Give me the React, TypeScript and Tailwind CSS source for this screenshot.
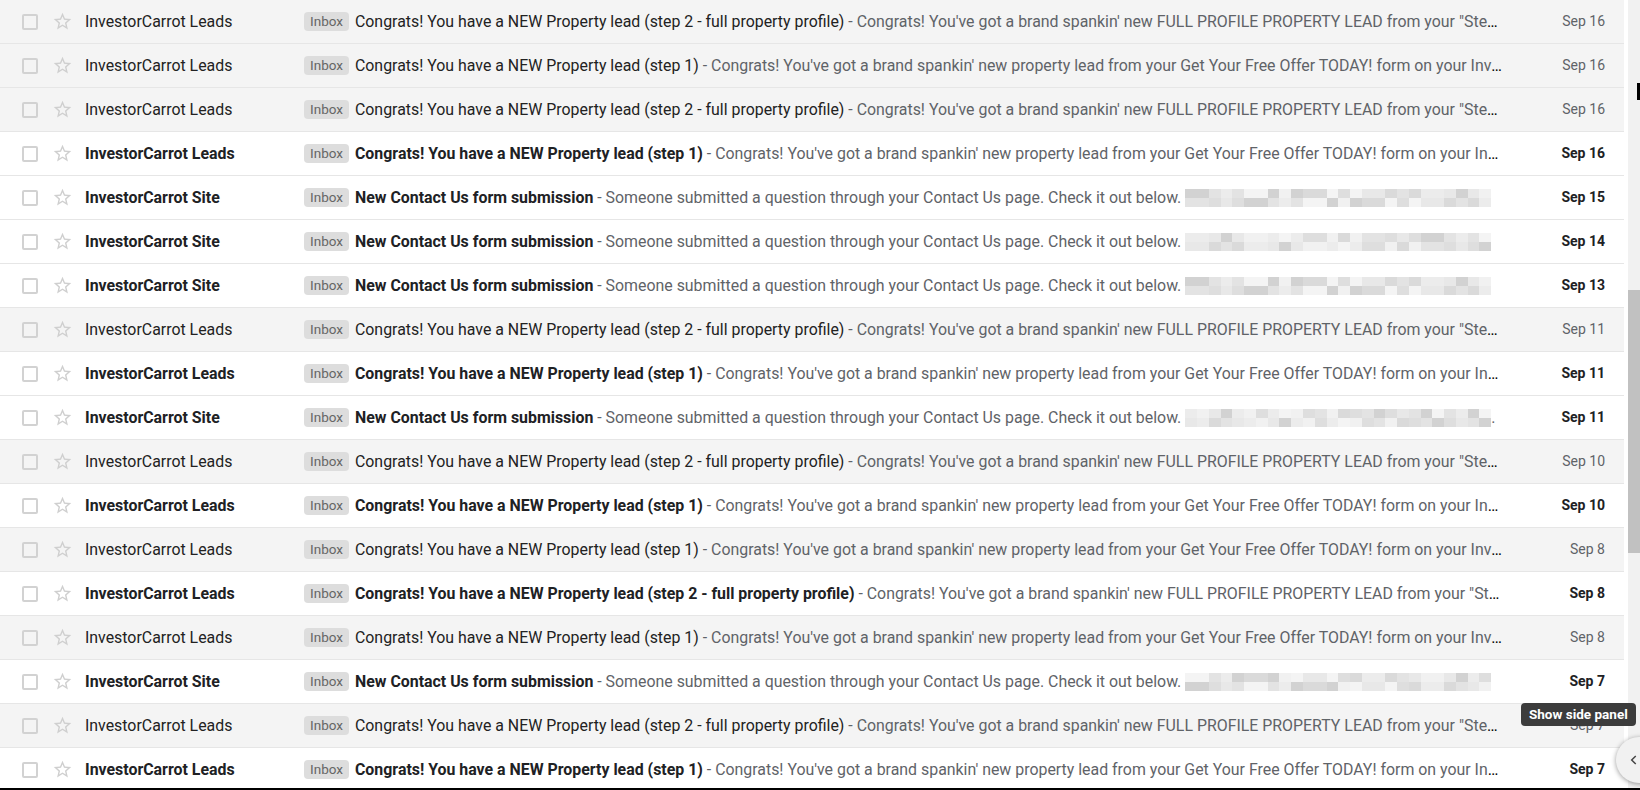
import React from 'react';

type Mail = {
  site: boolean;
  unread: boolean;
  kind: 'full' | 'step1' | 'contact';
  date: string;
  seed?: number;
  dot?: boolean;
};

const mails: Mail[] = [
  { site: false, unread: false, kind: 'full', date: 'Sep 16' },
  { site: false, unread: false, kind: 'step1', date: 'Sep 16' },
  { site: false, unread: false, kind: 'full', date: 'Sep 16' },
  { site: false, unread: true, kind: 'step1', date: 'Sep 16' },
  { site: true, unread: true, kind: 'contact', date: 'Sep 15', seed: 1 },
  { site: true, unread: true, kind: 'contact', date: 'Sep 14', seed: 2 },
  { site: true, unread: true, kind: 'contact', date: 'Sep 13', seed: 3 },
  { site: false, unread: false, kind: 'full', date: 'Sep 11' },
  { site: false, unread: true, kind: 'step1', date: 'Sep 11' },
  { site: true, unread: true, kind: 'contact', date: 'Sep 11', seed: 4, dot: true },
  { site: false, unread: false, kind: 'full', date: 'Sep 10' },
  { site: false, unread: true, kind: 'step1', date: 'Sep 10' },
  { site: false, unread: false, kind: 'step1', date: 'Sep 8' },
  { site: false, unread: true, kind: 'full', date: 'Sep 8' },
  { site: false, unread: false, kind: 'step1', date: 'Sep 8' },
  { site: true, unread: true, kind: 'contact', date: 'Sep 7', seed: 5 },
  { site: false, unread: false, kind: 'full', date: 'Sep 7' },
  { site: false, unread: true, kind: 'step1', date: 'Sep 7' },
];

const subjects = {
  full: 'Congrats! You have a NEW Property lead (step 2 - full property profile)',
  step1: 'Congrats! You have a NEW Property lead (step 1)',
  contact: 'New Contact Us form submission',
};

const snippets = {
  full: 'Congrats! You\'ve got a brand spankin\' new FULL PROFILE PROPERTY LEAD from your "Step 2 - Tell Us About Your Property" form on your InvestorCarrot website',
  step1:
    "Congrats! You've got a brand spankin' new property lead from your Get Your Free Offer TODAY! form on your InvestorCarrot website. Here are the details",
  contact: 'Someone submitted a question through your Contact Us page. Check it out below.',
};

const greys = [
  'bg-[#ececec]',
  'bg-[#e3e3e3]',
  'bg-[#dadada]',
  'bg-[#f1f1f1]',
  'bg-[#d2d2d2]',
  'bg-[#e8e8e8]',
  'bg-[#dedede]',
  'bg-[#f4f4f4]',
];

function Blur({ seed }: { seed: number }) {
  const cols = 26;
  const rows = [0, 1];
  return (
    <span className="ml-[4px] inline-flex h-[18px] w-[306px] flex-col align-middle">
      {rows.map((r) => (
        <span key={r} className="flex h-[9px]">
          {Array.from({ length: cols }).map((_, c) => {
            const v = (c * 7 + r * 13 + seed * 11 + ((c * c + seed) % 5)) % greys.length;
            return <span key={c} className={`h-full flex-1 ${greys[v]}`} />;
          })}
        </span>
      ))}
    </span>
  );
}

function StarIcon() {
  return (
    <svg viewBox="0 0 24 24" className="h-[21px] w-[21px] fill-[#cfcfcf]">
      <path d="M22 9.24l-7.19-.62L12 2 9.19 8.63 2 9.24l5.46 4.73L5.82 21 12 17.27 18.18 21l-1.63-7.03L22 9.24zM12 15.4l-3.76 2.27 1-4.28-3.32-2.88 4.38-.38L12 6.1l1.71 4.04 4.38.38-3.32 2.88 1 4.28L12 15.4z" />
    </svg>
  );
}

function Row({ m }: { m: Mail }) {
  return (
    <div
      className={`flex h-[44px] shrink-0 items-center border-b border-[#e6e6e6] pr-[19px] pl-[22px] text-[15.9px] ${
        m.unread ? 'bg-white' : 'bg-[#f4f4f4]'
      }`}
    >
      <div className="h-[16px] w-[16px] shrink-0 rounded-[2px] border-2 border-[#d2d2d2]" />
      <div className="ml-[14px] flex shrink-0 items-center">
        <StarIcon />
      </div>
      <div
        className={`ml-[12px] w-[219px] shrink-0 truncate ${
          m.unread ? 'font-bold text-[#202124]' : 'text-[#222222]'
        }`}
      >
        {m.site ? 'InvestorCarrot Site' : 'InvestorCarrot Leads'}
      </div>
      <div className="mr-[6px] flex h-[19px] shrink-0 items-center rounded-[4px] bg-[#dddddd] px-[6px] text-[13.5px] text-[#666666]">
        Inbox
      </div>
      <div className="mr-[23px] min-w-0 flex-1 truncate">
        <span className={m.unread ? 'font-bold text-[#202124]' : 'text-[#222222]'}>{subjects[m.kind]}</span>
        <span className="text-[#5f6368]">
          {' - '}
          {snippets[m.kind]}
          {m.kind === 'contact' && <Blur seed={m.seed ?? 0} />}
          {m.dot && '.'}
        </span>
      </div>
      <div
        className={`w-[80px] shrink-0 text-right text-[14px] ${
          m.unread ? 'font-bold text-[#202124]' : 'text-[#5f6368]'
        }`}
      >
        {m.date}
      </div>
    </div>
  );
}

export default function App() {
  return (
    <div
      className="relative flex h-[790px] w-[1640px] flex-col overflow-hidden bg-white"
      style={{ fontFamily: 'Roboto, "Noto Sans", sans-serif' }}
    >
      <div className="flex h-[788px] overflow-hidden">
        <div className="flex w-[1624px] shrink-0 flex-col overflow-hidden">
          {mails.map((m, i) => (
            <Row key={i} m={m} />
          ))}
        </div>
        <div className="w-[4px] shrink-0 bg-white" />
        <div className="relative flex w-[12px] shrink-0 flex-col bg-[#f1f1f1] pt-[290px]">
          <div className="h-[263px] w-full bg-[#c1c1c1]" />
        </div>
      </div>
      <div className="h-[2px] shrink-0 bg-black" />

      {/* mouse cursor edge */}
      <div className="absolute top-[83px] left-[1637px] h-[17px] w-[3px] bg-black" />

      {/* tooltip */}
      <div className="absolute top-[703px] left-[1521px] flex h-[23px] items-center rounded-[4px] bg-[#3c3c3c] px-[8px] text-[13.5px] font-bold text-white">
        Show side panel
      </div>

      {/* side panel toggle */}
      <div className="absolute top-[737px] left-[1616px] flex h-[46px] w-[46px] items-center rounded-full bg-[#f1f1f1] pl-[11px] shadow-[0_1px_5px_rgba(0,0,0,0.4)]">
        <svg viewBox="0 0 24 24" className="h-[14px] w-[14px] fill-none stroke-[#444] stroke-[2.5]">
          <path d="M15 5l-7 7 7 7" />
        </svg>
      </div>
    </div>
  );
}
